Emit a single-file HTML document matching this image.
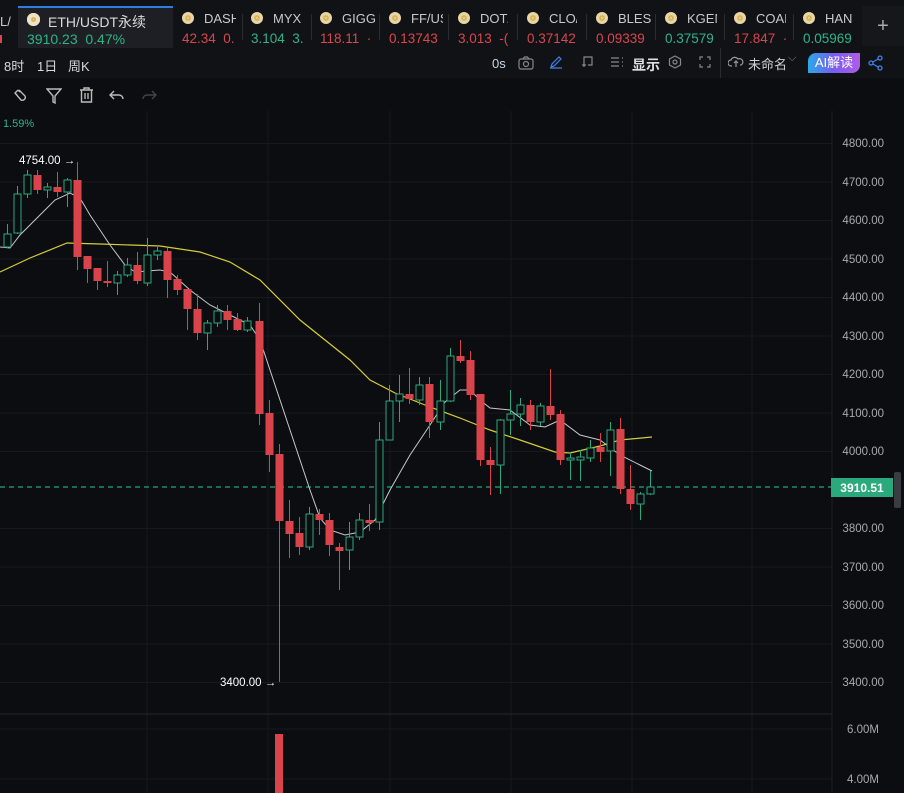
<!DOCTYPE html>
<html><head><meta charset="utf-8"><style>
*{margin:0;padding:0;box-sizing:border-box}
body{width:904px;height:793px;background:#0c0d10;overflow:hidden;font-family:"Liberation Sans","Noto Sans CJK SC",sans-serif;color:#d8d9dc;position:relative}
.tabs{position:absolute;left:0;top:0;width:904px;height:48px;background:#111216}
.tab{position:absolute;top:6px;height:40px;font-size:13px}
.tab .n{position:absolute;top:5px;left:22px;color:#c8c9cc;white-space:nowrap;overflow:hidden}
.tab .p{position:absolute;top:25px;left:0;white-space:nowrap;overflow:hidden;font-size:13.5px}
.tab .c{position:absolute;top:6px;left:0;width:12px;height:12px;border-radius:50%;background:#e8d6a6;border:3px solid #e8d6a6;box-shadow:inset 0 0 0 2px #d9b45a}
.sep{position:absolute;top:14px;width:1px;height:26px;background:#2a2c31}
.red{color:#d8474e}.grn{color:#2fb486}
.row2{position:absolute;top:48px;left:0;width:904px;height:30px;background:#111216;font-size:13px}
.row3{position:absolute;top:78px;left:0;width:904px;height:33px}
</style></head><body>
<div class="tabs">
 <div style="position:absolute;left:0;top:14px;font-size:13px;color:#c8c9cc">L/</div>
 <div style="position:absolute;left:0;top:35px;width:2px;height:8px;background:#d8474e"></div>
 <div style="position:absolute;left:18px;top:6px;width:155px;height:42px;background:#1d1f24;border-top:2px solid #2f7de1"></div>
 <div style="position:absolute;left:27px;top:13px;width:13px;height:13px;border-radius:50%;background:#ece3c8;box-shadow:inset 0 0 0 4px #ece3c8,inset 0 0 0 6px #d9b45a"></div>
 <div style="position:absolute;left:48px;top:12px;font-size:14px;color:#d8d9dc">ETH/USDT永续</div>
 <div style="position:absolute;left:27px;top:31px;font-size:14px" class="grn">3910.23&nbsp; 0.47%</div>
 <div class="tab" style="left:182px;width:55px"><div class="c"></div><div class="n" style="width:32px">DASH</div><div class="p red" style="width:55px">42.34&nbsp; 0.</div></div>
 <div class="sep" style="left:242px"></div>
 <div class="tab" style="left:251px;width:52px"><div class="c"></div><div class="n" style="width:30px">MYX</div><div class="p grn" style="width:52px">3.104&nbsp; 3.</div></div>
 <div class="sep" style="left:311px"></div>
 <div class="tab" style="left:320px;width:54px"><div class="c"></div><div class="n">GIGG</div><div class="p red">118.11 &nbsp;·</div></div>
 <div class="sep" style="left:379px"></div>
 <div class="tab" style="left:389px;width:55px"><div class="c"></div><div class="n" style="width:32px">FF/US</div><div class="p red">0.13743</div></div>
 <div class="sep" style="left:448px"></div>
 <div class="tab" style="left:458px;width:54px"><div class="c"></div><div class="n" style="width:28px">DOT/</div><div class="p red" style="width:54px">3.013&nbsp; -(</div></div>
 <div class="sep" style="left:517px"></div>
 <div class="tab" style="left:527px;width:55px"><div class="c"></div><div class="n" style="width:28px">CLO/</div><div class="p red">0.37142</div></div>
 <div class="sep" style="left:586px"></div>
 <div class="tab" style="left:596px;width:55px"><div class="c"></div><div class="n">BLES</div><div class="p red">0.09339</div></div>
 <div class="sep" style="left:655px"></div>
 <div class="tab" style="left:665px;width:55px"><div class="c"></div><div class="n" style="width:30px">KGEN</div><div class="p grn">0.37579</div></div>
 <div class="sep" style="left:724px"></div>
 <div class="tab" style="left:734px;width:55px"><div class="c"></div><div class="n" style="width:30px">COAI</div><div class="p red">17.847 &nbsp;·</div></div>
 <div class="sep" style="left:793px"></div>
 <div class="tab" style="left:803px;width:55px"><div class="c"></div><div class="n" style="width:30px">HAN</div><div class="p grn">0.05969</div></div>
 <div style="position:absolute;left:862px;top:6px;width:42px;height:40px;background:#16171b;color:#aaa;font-size:20px;text-align:center;line-height:40px;font-weight:300">+</div>
</div>
<div class="row2">
 <span style="position:absolute;left:4px;top:8px">8时</span>
 <span style="position:absolute;left:37px;top:8px">1日</span>
 <span style="position:absolute;left:68px;top:8px">周K</span>
 <span style="position:absolute;left:492px;top:8px;color:#c8d6e8">0s</span>
 <svg style="position:absolute;left:518px;top:8px" width="16" height="14" viewBox="0 0 16 14"><rect x="1" y="3" width="14" height="10" rx="2" fill="none" stroke="#888" stroke-width="1.2"/><circle cx="8" cy="8" r="2.5" fill="none" stroke="#888" stroke-width="1.2"/><path d="M5 3l1.5-2h3L11 3" fill="none" stroke="#888" stroke-width="1.2"/></svg>
 <svg style="position:absolute;left:549px;top:7px" width="14" height="14" viewBox="0 0 14 14"><path d="M2 12l1-3 7-7 2 2-7 7zM1 13h12" fill="none" stroke="#3b82e8" stroke-width="1.2"/></svg>
 <svg style="position:absolute;left:580px;top:7px" width="14" height="14" viewBox="0 0 14 14"><path d="M4 10V2h8v8H8M2 10h4M4 8v4" fill="none" stroke="#888" stroke-width="1.2"/></svg>
 <svg style="position:absolute;left:610px;top:8px" width="14" height="12" viewBox="0 0 14 12"><path d="M1 2h8M1 6h8M1 10h8M12 2h1M12 6h1M12 10h1" stroke="#888" stroke-width="1.2"/></svg>
 <span style="position:absolute;left:632px;top:7px;font-size:14px;color:#e0e0e0;font-weight:bold">显示</span>
 <svg style="position:absolute;left:668px;top:7px" width="14" height="14" viewBox="0 0 14 14"><path d="M7 1l5.5 3v6L7 13 1.5 10V4z" fill="none" stroke="#888" stroke-width="1.2"/><circle cx="7" cy="7" r="2" fill="none" stroke="#888" stroke-width="1.2"/></svg>
 <svg style="position:absolute;left:699px;top:8px" width="12" height="12" viewBox="0 0 12 12"><path d="M1 4V1h3M8 1h3v3M11 8v3H8M4 11H1V8" fill="none" stroke="#888" stroke-width="1.2"/></svg>
 <div style="position:absolute;left:720px;top:0;width:1px;height:30px;background:#2a2c31"></div>
 <svg style="position:absolute;left:728px;top:8px" width="16" height="12" viewBox="0 0 16 12"><path d="M4 10H3a3 3 0 010-6 4 4 0 017-1 3 3 0 013 6h-1M8 11V5M6 7l2-2 2 2" fill="none" stroke="#999" stroke-width="1.2"/></svg>
 <span style="position:absolute;left:748px;top:6px;color:#d0d0d0">未命名</span>
 <span style="position:absolute;left:788px;top:4px;color:#888;font-size:11px">⌵</span>
 <div style="position:absolute;left:808px;top:5px;width:52px;height:20px;border-radius:8px 0 8px 0;background:linear-gradient(90deg,#2aa8e8,#7a5cf0,#b05be8);color:#fff;font-size:13px;text-align:center;line-height:20px">AI解读</div>
 <svg style="position:absolute;left:868px;top:7px" width="16" height="16" viewBox="0 0 16 16"><circle cx="12" cy="3" r="2" fill="none" stroke="#3b82e8" stroke-width="1.3"/><circle cx="3" cy="8" r="2" fill="none" stroke="#3b82e8" stroke-width="1.3"/><circle cx="12" cy="13" r="2" fill="none" stroke="#3b82e8" stroke-width="1.3"/><path d="M5 7l5-3M5 9l5 3" stroke="#3b82e8" stroke-width="1.3"/></svg>
</div>
<div class="row3">
 <svg style="position:absolute;left:12px;top:9px" width="18" height="18" viewBox="0 0 18 18"><path d="M6 3l-3 3 6 7a3 3 0 004-4L7 3M3 6l2 2M6 3l2 2" fill="none" stroke="#bbb" stroke-width="1.4"/></svg>
 <svg style="position:absolute;left:46px;top:9px" width="16" height="18" viewBox="0 0 16 18"><path d="M1 2h14L9 9v7L7 15V9z" fill="none" stroke="#bbb" stroke-width="1.4"/></svg>
 <svg style="position:absolute;left:79px;top:8px" width="15" height="18" viewBox="0 0 15 18"><path d="M1 4h13M5 4V2h5v2M2.5 4v12h10V4M6 7v6M9 7v6" fill="none" stroke="#bbb" stroke-width="1.4"/></svg>
 <svg style="position:absolute;left:109px;top:11px" width="16" height="12" viewBox="0 0 16 12"><path d="M5 2L1 6l4 4M1 6h9a4 4 0 014 4" fill="none" stroke="#bbb" stroke-width="1.4"/></svg>
 <svg style="position:absolute;left:141px;top:11px" width="16" height="12" viewBox="0 0 16 12"><path d="M11 2l4 4-4 4M15 6H6a4 4 0 00-4 4" fill="none" stroke="#444" stroke-width="1.4"/></svg>
</div>
<svg style="position:absolute;left:0;top:111px" width="904" height="682" viewBox="0 111 904 682">
<rect x="0" y="111" width="904" height="682" fill="#0c0d10"/>
<g stroke="#18191d" stroke-width="1">
<path d="M147 111V793M268 111V793M390 111V793M511 111V793M632 111V793M752 111V793"/>
<path d="M0 143.5H832M0 182H832M0 220.5H832M0 259H832M0 297.5H832M0 336H832M0 374.5H832M0 413H832M0 451.5H832M0 528.5H832M0 567H832M0 605.5H832M0 644H832M0 682.5H832M0 729H832M0 779H832"/>
</g>
<path d="M0 714H832" stroke="#24262b"/>
<path d="M832 111V793" stroke="#1f2125"/>
<text x="3" y="127" font-size="11" fill="#2fb486">1.59%</text>
<g font-size="11.5" fill="#a8a9ad" text-anchor="end">
<text x="884" y="147">4800.00</text><text x="884" y="186">4700.00</text><text x="884" y="224">4600.00</text><text x="884" y="263">4500.00</text><text x="884" y="301">4400.00</text><text x="884" y="340">4300.00</text><text x="884" y="378">4200.00</text><text x="884" y="417">4100.00</text><text x="884" y="455">4000.00</text><text x="884" y="532">3800.00</text><text x="884" y="571">3700.00</text><text x="884" y="609">3600.00</text><text x="884" y="648">3500.00</text><text x="884" y="686">3400.00</text><text x="879" y="733">6.00M</text><text x="879" y="783">4.00M</text>
</g>
<path d="M0 487H832" stroke="#1fa878" stroke-width="1.2" stroke-dasharray="5 4"/>
<rect x="831" y="478" width="62" height="19" fill="#2aa97c"/>
<text x="862" y="492" font-size="12" fill="#fff" font-weight="bold" text-anchor="middle">3910.51</text>
<rect x="894" y="472" width="7" height="36" rx="2" fill="#3a3c42"/>
<polyline fill="none" stroke="#d6cc3a" stroke-width="1.2" points="0,272 30,258 67,243 100,244 160,246 200,252 230,262 260,280 300,320 350,360 370,380 395,393 430,407 460,418 490,430 520,440 555,452 570,453 600,446 620,440 652,437"/>
<polyline fill="none" stroke="#c8c8cc" stroke-width="1" points="0,247 10,248 20,235 40,215 55,200 70,193 80,198 90,215 110,245 125,265 135,272 160,270 170,272 190,290 210,305 230,315 250,325 260,340 270,370 290,430 310,490 320,518 330,530 345,535 360,532 375,520 390,490 410,455 430,425 445,402 460,390 470,390 480,400 490,408 510,410 530,425 545,427 560,420 580,435 600,440 620,455 640,465 652,471"/>
<text x="19" y="164" font-size="11.5" fill="#fff">4754.00 →</text>
<text x="220" y="686" font-size="11.5" fill="#fff">3400.00 →</text>
<rect x="275" y="734" width="8" height="59" fill="#d9444b"/>
<g id="cand"></g>
</svg>
<script>
var d=[["g",7,234,247,224,248],["g",17,194,233,186,234],["g",27,175,194,170,198],["r",37,175,190,170,194],["g",47,187,190,183,198],["r",57,187,192,172,197],["g",67,180,192,178,207],["r",77,180,257,162,270],["r",87,256,269,256,283],["r",97,268,281,268,290],["r",107,281,283,261,287],["g",117,275,283,271,295],["g",127,265,275,258,277],["r",137,265,281,252,284],["g",147,255,283,238,286],["g",157,251,255,247,260],["r",167,251,280,248,298],["r",177,279,290,275,295],["r",187,289,309,289,330],["r",197,309,333,294,340],["g",207,323,333,320,350],["g",217,311,323,305,327],["r",227,311,320,305,330],["r",237,319,330,313,331],["g",247,321,330,317,332],["r",259,321,414,303,425],["r",269,413,455,400,472],["r",279,454,521,444,682],["r",289,521,534,500,558],["r",299,533,547,517,555],["g",309,514,547,507,550],["r",319,514,520,509,535],["r",329,520,545,513,556],["r",339,547,551,543,590],["g",349,537,550,522,570],["g",359,520,537,513,540],["r",369,520,523,504,531],["g",379,440,522,422,530],["g",389,401,440,385,440],["g",399,394,401,375,422],["r",409,394,399,368,404],["g",419,385,400,377,405],["r",429,384,422,377,438],["g",440,401,422,380,430],["g",450,356,401,348,402],["r",460,356,361,340,363],["r",470,360,395,351,400],["r",480,394,460,394,466],["r",490,460,465,447,495],["g",500,420,465,419,494],["g",510,414,420,390,435],["g",520,405,414,398,426],["r",530,405,422,400,430],["g",540,406,422,403,426],["r",550,406,415,369,420],["r",560,414,460,410,465],["g",570,458,460,452,480],["g",580,457,460,450,481],["g",590,448,458,440,462],["r",600,447,452,433,462],["g",610,430,451,422,476],["r",620,429,489,418,494],["r",630,489,504,465,510],["g",640,494,504,492,520],["g",650,487,494,471,495]];
var s="";d.forEach(function(c){var col=c[0]=="g"?"#2aa97c":"#d9444b";var x=c[1];
s+='<line x1="'+(x+.5)+'" x2="'+(x+.5)+'" y1="'+c[4]+'" y2="'+c[5]+'" stroke="'+col+'"/>';
if(c[0]=="g")s+='<rect x="'+(x-3)+'" y="'+c[2]+'" width="7" height="'+Math.max(1,c[3]-c[2])+'" fill="#0c0d10" stroke="'+col+'"/>';
else s+='<rect x="'+(x-3.5)+'" y="'+c[2]+'" width="8" height="'+Math.max(2,c[3]-c[2])+'" fill="'+col+'"/>';});
document.getElementById("cand").innerHTML=s;
</script>
</body></html>
